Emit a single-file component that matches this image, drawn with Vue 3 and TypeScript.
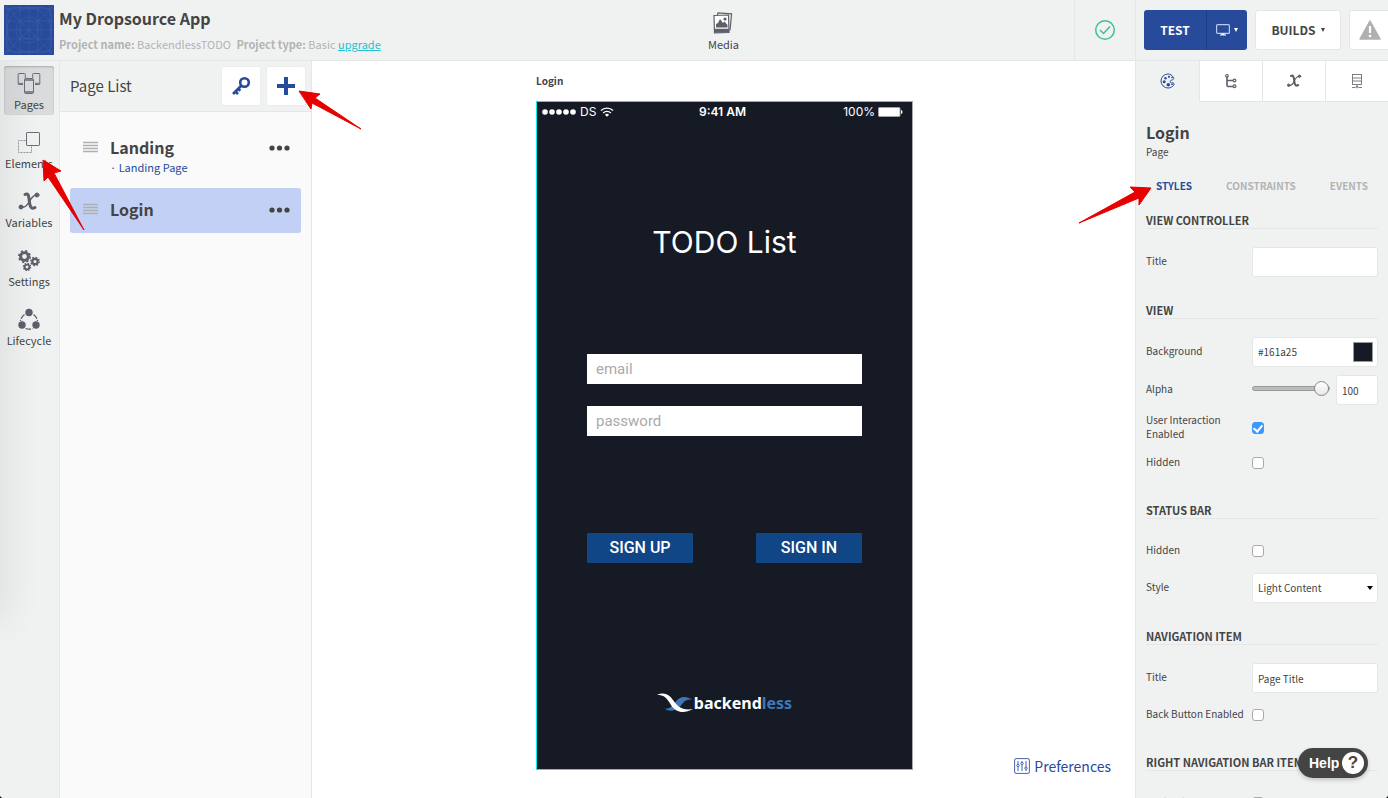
<script setup lang="ts">
import { ref } from 'vue'

interface NavItem {
  id: string
  label: string
}

interface PageItem {
  name: string
  note: string
}

const navItems: NavItem[] = [
  { id: 'pages', label: 'Pages' },
  { id: 'elements', label: 'Elements' },
  { id: 'variables', label: 'Variables' },
  { id: 'settings', label: 'Settings' },
  { id: 'lifecycle', label: 'Lifecycle' },
]

const pages: PageItem[] = [
  { name: 'Landing', note: 'Landing Page' },
  { name: 'Login', note: '' },
]

const inspectorTabs: string[] = ['styles', 'tree', 'variables', 'data']
const subTabs: string[] = ['STYLES', 'CONSTRAINTS', 'EVENTS']

const activeNav = ref('pages')
const activePage = ref('Login')
const activeTab = ref('styles')
const activeSubTab = ref('STYLES')

const viewTitle = ref('')
const background = ref('#161a25')
const alpha = ref(100)
const interaction = ref(true)
const viewHidden = ref(false)
const barHidden = ref(false)
const barStyle = ref('Light Content')
const navTitle = ref('Page Title')
const backButton = ref(false)
const rightEnabled = ref(false)
const email = ref('')
const password = ref('')
</script>

<template>
  <div class="app">
    <header class="topbar">
      <div class="project">
        <svg class="app-icon" viewBox="0 0 50 50" aria-hidden="true">
          <rect width="50" height="50" fill="#274a9a" />
          <g fill="none" stroke="#5573b8" stroke-width="0.5" opacity="0.6">
            <rect x="2.500" y="2.500" width="45" height="45" rx="8" />
            <path d="M0 0L50 50M50 0L0 50M0 25H50M25 0V50M16 0V50M34 0V50M0 16H50M0 34H50M4 0V50M46 0V50M0 4H50M0 46H50" />
            <circle cx="25" cy="25" r="22" />
            <circle cx="25" cy="25" r="13" />
            <circle cx="25" cy="25" r="9" />
          </g>
        </svg>
        <div class="project-text">
          <h1>My Dropsource App</h1>
          <p>
            <b>Project name:</b> BackendlessTODO
            <span class="type"><b>Project type:</b> Basic <a href="#">upgrade</a></span>
          </p>
        </div>
      </div>
      <div class="media-area">
        <button type="button" class="media">
          <svg width="20" height="22" viewBox="0 0 20 22" aria-hidden="true">
            <path d="M4.500 3L5 .8 18.600 1.800 17 18.500" fill="none" stroke="#5b606b" stroke-width="1.200" />
            <path d="M1 3.500L15.500 3 16 20.500 1.500 21z" fill="#fff" stroke="#5b606b" stroke-width="1.200" />
            <path d="M1.300 16.800H16V20.800H1.500z" fill="#5b606b" />
            <path d="M3 15.500V12l2-1 2-4 3 4 1.500-1.500L14.500 13v2.500z" fill="#5b606b" />
            <circle cx="12" cy="7" r="1.600" fill="#5b606b" />
          </svg>
          <span>Media</span>
        </button>
      </div>
      <div class="status">
        <svg width="22" height="22" viewBox="0 0 22 22" aria-label="Saved">
          <circle cx="11" cy="11" r="9.300" fill="none" stroke="#3fbf94" stroke-width="1.500" />
          <path d="M6 11l3.500 3.500 6.500-7" fill="none" stroke="#3fbf94" stroke-width="1.500" />
        </svg>
      </div>
      <div class="actions">
        <div class="test-group">
          <button type="button" class="test">TEST</button>
          <button type="button" class="device" aria-label="Device">
            <svg width="14" height="12" viewBox="0 0 14 12" aria-hidden="true">
              <rect x=".6" y=".6" width="12.800" height="8.800" rx="1" fill="none" stroke="#b9c9f0" stroke-width="1.200" />
              <path d="M5.500 9.500h3v1H10v1H4v-1h1.500z" fill="#fff" />
            </svg>
            <i class="caret"></i>
          </button>
        </div>
        <button type="button" class="builds">BUILDS <i class="caret"></i></button>
        <button type="button" class="warn" aria-label="Warnings">
          <svg width="22" height="20" viewBox="0 0 22 20" aria-hidden="true">
            <path d="M11 1L21 19H1z" fill="#b0b0b0" stroke="#b0b0b0" stroke-width="1.500" stroke-linejoin="round" />
            <path d="M11 6v7" stroke="#fff" stroke-width="2.200" />
            <circle cx="11" cy="16" r="1.300" fill="#fff" />
          </svg>
        </button>
      </div>
    </header>

    <div class="body">
      <nav class="rail">
        <button
          v-for="item in navItems"
          :key="item.id"
          type="button"
          class="rail-item"
          :class="{ active: activeNav === item.id }"
          @click="activeNav = item.id"
        >
          <svg width="24" height="24" viewBox="0 0 24 24" aria-hidden="true">
            <g v-if="item.id === 'pages'" fill="none" stroke="#6a6e78">
              <path d="M6 12.500H2a.8.8 0 01-.8-.8V2.300a.8.8 0 01.8-.8h5.500a.8.800 0 01.8.8V6M18 12.500h4a.8.8 0 00.8-.8V2.300a.8.8 0 00-.8-.8h-5.500a.8.800 0 00-.8.8V6M1.200 11.300H6M18 11.300h4.800" />
              <rect x="7.500" y="6.500" width="9" height="15" rx="1.200" />
              <path d="M7.500 8h9M7.500 20h9" stroke-width="1.400" />
            </g>
            <g v-else-if="item.id === 'elements'" fill="none" stroke="#6a6e78">
              <path d="M8.500 9.500H1.500v12h13V15" stroke="#92959b" stroke-dasharray="2 1" />
              <rect x="9.500" y="1.500" width="13" height="13" rx=".6" />
            </g>
            <g v-else-if="item.id === 'variables'" fill="none" stroke="#5b606b" stroke-linecap="round">
              <path d="M8 4.500C11.500 2.500 11.800 6 12.300 11s1.500 9 5.700 6.500" stroke-width="3" />
              <path d="M20 4.500C16 5 14 8.500 12 12S7.500 18 4 17.500" stroke-width="1.500" />
              <circle cx="20" cy="5" r="2" fill="#5b606b" />
              <circle cx="4" cy="17" r="2" fill="#5b606b" />
            </g>
            <g v-else-if="item.id === 'settings'" fill="none" stroke="#5b606b">
              <circle cx="7.500" cy="7.500" r="3.900" stroke-width="2.900" />
              <circle cx="7.500" cy="7.500" r="5.700" stroke-width="1.600" stroke-dasharray="2.200 2.280" />
              <circle cx="18" cy="12.500" r="2.700" stroke-width="2.300" />
              <circle cx="18" cy="12.500" r="4.200" stroke-width="1.400" stroke-dasharray="1.650 1.650" />
              <circle cx="10" cy="18" r="2.400" stroke-width="1.900" />
              <circle cx="10" cy="18" r="3.600" stroke-width="1.300" stroke-dasharray="1.400 1.430" />
            </g>
            <g v-else>
              <path d="M7.500 6.500A10 10 0 003.500 13M16.500 6.500A10 10 0 0120.500 13M8.500 20.500a9 9 0 007 0" fill="none" stroke="#5b606b" stroke-width="1.300" stroke-dasharray="5.500 1.200" />
              <circle cx="12" cy="4.500" r="3.700" fill="#5b606b" />
              <circle cx="5" cy="17" r="3.700" fill="#5b606b" />
              <circle cx="19" cy="17" r="3.700" fill="#5b606b" />
            </g>
          </svg>
          <span>{{ item.label }}</span>
        </button>
      </nav>

      <section class="page-list">
        <div class="list-head">
          <h2>Page List</h2>
          <button type="button" aria-label="Access">
            <svg width="20" height="20" viewBox="0 0 20 20" aria-hidden="true">
              <circle cx="13.500" cy="6.500" r="4.300" fill="none" stroke="#274a9a" stroke-width="2.600" />
              <path d="M10.500 9.500L2 18M4.500 15.500l2.500 2.500M7.500 13l1.800 1.800" fill="none" stroke="#274a9a" stroke-width="2.600" />
            </svg>
          </button>
          <button type="button" aria-label="Add page">
            <svg width="18" height="18" viewBox="0 0 18 18" aria-hidden="true">
              <path d="M9 0v18M0 9h18" stroke="#274a9a" stroke-width="4" />
            </svg>
          </button>
        </div>
        <ul>
          <li v-for="page in pages" :key="page.name" :class="{ selected: activePage === page.name }" @click="activePage = page.name">
            <svg class="grip" width="15" height="12" viewBox="0 0 15 12" aria-hidden="true">
              <path d="M0 1.500h15M0 4.500h15M0 7.500h15M0 10.500h15" stroke="#b0b0b0" stroke-width="1.400" />
            </svg>
            <div class="page-name">
              <strong>{{ page.name }}</strong>
              <small v-if="page.note">· {{ page.note }}</small>
            </div>
            <button type="button" class="more" :aria-label="'Options for ' + page.name">
              <svg width="21" height="6" viewBox="0 0 21 6" aria-hidden="true">
                <g fill="#444"><circle cx="3" cy="3" r="2.600" /><circle cx="10.500" cy="3" r="2.600" /><circle cx="18" cy="3" r="2.600" /></g>
              </svg>
            </button>
          </li>
        </ul>
      </section>

      <main class="canvas">
        <div class="stage">
          <h3>Login</h3>
          <div class="phone">
            <div class="phone-status">
              <span class="carrier">
                <svg width="34" height="6" viewBox="0 0 34 6" aria-hidden="true">
                  <g fill="#fff"><circle cx="3" cy="3" r="2.800" /><circle cx="10" cy="3" r="2.800" /><circle cx="17" cy="3" r="2.800" /><circle cx="24" cy="3" r="2.800" /><circle cx="31" cy="3" r="2.800" /></g>
                </svg>
                DS
                <svg width="14" height="10" viewBox="0 0 14 10" aria-hidden="true">
                  <path d="M1 3.600a8.500 8.500 0 0112 0M3.200 5.900a5.400 5.400 0 017.600 0" fill="none" stroke="#fff" stroke-width="1.400" />
                  <path d="M7 9.800L4.900 7.700a3 3 0 014.200 0z" fill="#fff" />
                </svg>
              </span>
              <span class="clock">9:41 AM</span>
              <span class="power">
                100%
                <svg width="25" height="10" viewBox="0 0 25 10" aria-hidden="true">
                  <rect x=".5" y=".5" width="21.500" height="9" rx="1" fill="#fff" stroke="#a2a3a8" />
                  <path d="M23 3c2 .5 2 3.500 0 4z" fill="#fff" />
                </svg>
              </span>
            </div>
            <p class="screen-title">TODO List</p>
            <form class="login" @submit.prevent>
              <input v-model="email" type="email" placeholder="email" aria-label="email" />
              <input v-model="password" type="password" placeholder="password" aria-label="password" />
              <div class="login-buttons">
                <button type="button">SIGN UP</button>
                <button type="button">SIGN IN</button>
              </div>
            </form>
            <div class="brand">
              <svg width="36" height="20" viewBox="0 0 36 20" aria-hidden="true">
                <path d="M7.500 15.500c5 1 8-2.500 11.500-7s9-6.500 16.500-1.500c-5.500-1.500-8 1-11.500 5.500S13.500 20 7.500 15.500z" fill="#3c78b8" />
                <path d="M0 2c7-3 12-1 16 5s9 11 20 9c-9 5-17 4-22-4S7 2 0 2z" fill="#fff" />
              </svg>
              <span>backend<em>less</em></span>
            </div>
          </div>
        </div>
        <button type="button" class="preferences">
          <svg width="16" height="16" viewBox="0 0 16 16" aria-hidden="true">
            <g fill="none" stroke="#4564ad">
              <rect x=".6" y=".6" width="14.800" height="14.800" rx="1.500" />
              <path d="M4 3v3M4 9v4M8 3v1.500M8 7v6M12 3v6M12 11.500V13" />
              <circle cx="4" cy="7.500" r="1.200" /><circle cx="8" cy="5.500" r="1.200" /><circle cx="12" cy="10.200" r="1.200" />
            </g>
          </svg>
          Preferences
        </button>
      </main>

      <aside class="inspector">
        <div class="tabs">
          <button
            v-for="tab in inspectorTabs"
            :key="tab"
            type="button"
            :aria-label="tab"
            :class="{ active: activeTab === tab }"
            @click="activeTab = tab"
          >
            <svg width="16" height="16" viewBox="0 0 16 16" aria-hidden="true">
              <g v-if="tab === 'styles'">
                <path d="M13.500 4.500C12 2 10 1 8 1a6.900 6.900 0 000 14c3 0 6-2 6-4 0-1.500-1.500-1-2.700-1.200-1.800-.4-1.300-2.300 0-2.600 1.500-.3 3-.9 2.200-2.700z" fill="none" stroke="#274a9a" />
                <g fill="#274a9a"><circle cx="5.500" cy="5.200" r="1.200" /><circle cx="4.200" cy="8.700" r="1.500" /><circle cx="8.300" cy="11.700" r="1.800" /><circle cx="9" cy="3.800" r="1.100" /><circle cx="12" cy="4.600" r=".8" /><circle cx="12" cy="11.300" r=".9" /></g>
              </g>
              <g v-else-if="tab === 'tree'" fill="none" stroke="#5b606b" stroke-width="1.200">
                <path d="M4 4v8.500q0 1 1 1h5M4 7.500h6" stroke-width="1.600" />
                <circle cx="4" cy="2.800" r="1.300" /><circle cx="11.500" cy="7.500" r="1.400" /><circle cx="11.500" cy="13.300" r="1.400" />
              </g>
              <g v-else-if="tab === 'variables'" fill="none" stroke="#5b606b" stroke-linecap="round">
                <path d="M5 3C7.300 1.800 7.800 4 8.200 7.500s1 6.300 4 4.500" stroke-width="2.100" />
                <path d="M13.500 3C10.500 3.300 9 6 8 8.500S5 12.800 2.500 12.500" stroke-width="1.200" />
                <circle cx="13.500" cy="3.300" r="1.200" fill="#5b606b" /><circle cx="2.700" cy="12.200" r="1.200" fill="#5b606b" />
              </g>
              <g v-else fill="none" stroke="#7a7e86">
                <rect x="3.500" y="1.500" width="9" height="10" />
                <path d="M3.500 5h9M3.500 8h9M8 11.500V14M3 14.500h3.500M9.500 14.500H13" />
                <circle cx="8" cy="14" r=".9" />
              </g>
            </svg>
          </button>
        </div>
        <div class="inspector-body">
          <h2>Login</h2>
          <p class="kind">Page</p>
          <div class="sub-tabs">
            <button v-for="tab in subTabs" :key="tab" type="button" :class="{ active: activeSubTab === tab }" @click="activeSubTab = tab">{{ tab }}</button>
          </div>

          <section>
            <h4>VIEW CONTROLLER</h4>
            <div class="row">
              <label for="vc-title">Title</label>
              <input id="vc-title" v-model="viewTitle" type="text" class="field" />
            </div>
          </section>

          <section>
            <h4>VIEW</h4>
            <div class="row">
              <label for="view-bg">Background</label>
              <div class="field color">
                <input id="view-bg" v-model="background" type="text" />
                <span class="swatch" :style="{ background }"></span>
              </div>
            </div>
            <div class="row">
              <label for="view-alpha">Alpha</label>
              <div class="alpha">
                <input id="view-alpha" v-model.number="alpha" type="range" min="0" max="100" />
                <input v-model.number="alpha" type="text" class="field" aria-label="Alpha value" />
              </div>
            </div>
            <div class="row check">
              <label for="view-ui">User Interaction Enabled</label>
              <input id="view-ui" v-model="interaction" type="checkbox" />
            </div>
            <div class="row check">
              <label for="view-hidden">Hidden</label>
              <input id="view-hidden" v-model="viewHidden" type="checkbox" />
            </div>
          </section>

          <section>
            <h4>STATUS BAR</h4>
            <div class="row check">
              <label for="bar-hidden">Hidden</label>
              <input id="bar-hidden" v-model="barHidden" type="checkbox" />
            </div>
            <div class="row">
              <label for="bar-style">Style</label>
              <div class="select-wrap">
                <select id="bar-style" v-model="barStyle" class="field">
                  <option>Light Content</option>
                </select>
              </div>
            </div>
          </section>

          <section>
            <h4>NAVIGATION ITEM</h4>
            <div class="row">
              <label for="nav-title">Title</label>
              <input id="nav-title" v-model="navTitle" type="text" class="field" />
            </div>
            <div class="row check">
              <label for="nav-back">Back Button Enabled</label>
              <input id="nav-back" v-model="backButton" type="checkbox" />
            </div>
          </section>

          <section>
            <h4>RIGHT NAVIGATION BAR ITEM</h4>
            <div class="row check">
              <label for="right-enabled">Enabled</label>
              <input id="right-enabled" v-model="rightEnabled" type="checkbox" />
            </div>
          </section>
        </div>
      </aside>
    </div>

    <button type="button" class="help">Help <span>?</span></button>

    <svg class="arrows left" width="370" height="240" viewBox="0 0 370 240" aria-hidden="true">
      <path d="M299 91L320 94 315 98 361 129 312 103 311 109Z" />
      <path d="M43 160L61 171 54 173 84 230 48 177 44 181Z" />
    </svg>
    <svg class="arrows right" width="80" height="44" viewBox="0 0 80 44" aria-hidden="true">
      <path d="M75 6L54 5 59 10 3 41 63 16 63 23Z" />
    </svg>
  </div>
</template>

<style>
html,
body {
  margin: 0;
  background: #111;
}
</style>

<style scoped>
.app {
  position: relative;
  display: flex;
  flex-direction: column;
  height: 100vh;
  overflow: hidden;
  border-radius: 0 0 4px 4px;
  background: #fff;
  color: #444;
  font-family: "Noto Sans CJK JP", "Noto Sans", sans-serif;
  font-size: 11px;
  line-height: 14px;
}
* {
  box-sizing: border-box;
}
h1, h2, h3, h4, p, ul {
  margin: 0;
  padding: 0;
}
button, input, select {
  margin: 0;
  padding: 0;
  border: 0;
  background: none;
  color: inherit;
  font: inherit;
  outline: 0;
}
svg {
  display: block;
  flex: none;
}

.topbar {
  display: grid;
  grid-template-columns: 312px minmax(0, 1fr) 61px 253px;
  height: 61px;
  flex: none;
  background: #f0f2f2;
  border-bottom: 1px solid #e5e6e6;
}
.project {
  display: flex;
  gap: 5px;
  padding: 5px 4px;
  white-space: nowrap;
}
.app-icon {
  width: 50px;
  height: 50px;
}
.project-text h1 {
  margin-top: 2px;
  font-size: 16px;
  line-height: 22px;
}
.project-text p {
  margin-top: 8px;
  color: #b3b3b3;
}
.type {
  margin-left: 3px;
}
.type a {
  color: #1fc1cf;
}
.media-area {
  display: flex;
  justify-content: center;
  padding-left: 61px;
}
.media {
  display: flex;
  flex-direction: column;
  align-items: center;
  gap: 3px;
  padding-top: 12px;
  align-self: flex-start;
}
.status,
.actions {
  display: flex;
  align-items: center;
  border-left: 1px solid #e5e6e6;
}
.status {
  justify-content: center;
}
.actions {
  gap: 8px;
  padding-left: 8px;
  overflow: hidden;
  font-size: 12px;
  font-weight: bold;
}
.test-group {
  display: flex;
  height: 40px;
  flex: none;
  border-radius: 3px;
  background: #274a9a;
  color: #fff;
}
.test {
  width: 63px;
  border-right: 1px solid #1f3d85;
}
.device {
  display: flex;
  align-items: center;
  justify-content: center;
  gap: 4px;
  width: 40px;
}
.caret {
  border: 2px solid transparent;
  border-top: 4px solid currentColor;
  border-bottom: 0;
}
.builds,
.warn {
  display: flex;
  align-items: center;
  justify-content: center;
  gap: 5px;
  width: 86px;
  height: 40px;
  flex: none;
  border: 1px solid #e5e6e6;
  border-radius: 3px;
  background: #fff;
}
.warn {
  width: 42px;
}

.body {
  display: grid;
  grid-template-columns: 60px 252px minmax(0, 1fr) 253px;
  flex: 1;
  min-height: 0;
}
.rail {
  position: relative;
  display: flex;
  flex-direction: column;
  gap: 10px;
  padding: 5px 4px;
  overflow: hidden;
  border-right: 1px solid #e5e6e6;
  background: #f0f2f2;
}
.rail::before {
  position: absolute;
  top: -40px;
  bottom: 178px;
  left: -20px;
  width: 20px;
  box-shadow: 0 0 40px rgba(0, 0, 0, 0.14);
  content: "";
}
.rail-item {
  display: flex;
  flex-direction: column;
  align-items: center;
  gap: 1px;
  width: 50px;
  height: 49px;
  flex: none;
  padding-top: 6px;
  border-radius: 3px;
  white-space: nowrap;
}
.rail-item.active {
  background: #dadbdc;
  box-shadow: inset 0 1px 2px #aaa;
}
.page-list {
  border-right: 1px solid #e5e6e6;
  background: #fafafa;
}
.list-head {
  display: flex;
  align-items: center;
  gap: 5px;
  height: 51px;
  padding: 0 5px 0 10px;
  border-bottom: 1px solid #e5e6e6;
  background: #f0f2f2;
}
.list-head h2 {
  flex: 1;
  font-size: 15px;
  font-weight: normal;
}
.list-head button {
  display: grid;
  place-items: center;
  width: 40px;
  height: 40px;
  border: 1px solid #ebecec;
  border-radius: 3px;
  background: #fff;
}
.page-list ul {
  display: flex;
  flex-direction: column;
  gap: 8px;
  padding: 14px 10px;
  list-style: none;
}
.page-list li {
  display: flex;
  align-items: flex-start;
  gap: 12px;
  min-height: 45px;
  padding: 10px 11px 0 13px;
  border-radius: 3px;
}
.page-list li:first-child {
  min-height: 54px;
}
.selected {
  background: #c2d0f5;
}
.grip {
  margin-top: 5px;
}
.page-name {
  display: flex;
  flex: 1;
  flex-direction: column;
}
.page-name strong {
  font-size: 16px;
  line-height: 22px;
}
.page-name small {
  color: #274a9a;
  font-size: 11px;
  line-height: 18px;
}
.more {
  margin-top: 9px;
}

.canvas {
  position: relative;
  display: flex;
  justify-content: center;
  padding-left: 2px;
  overflow: hidden;
}
.stage h3 {
  margin: 13px 0;
  font-size: 10px;
  line-height: 14px;
}
.phone {
  display: flex;
  flex-direction: column;
  align-items: center;
  width: 377px;
  height: 669px;
  border: 1px solid #a8a8a8;
  border-top-color: #00f0f0;
  border-left-color: #00f0f0;
  background: #161a25;
  color: #fff;
  font-family: Inter, Roboto, sans-serif;
}
.phone-status {
  display: grid;
  grid-template-columns: 1fr auto 1fr;
  align-items: center;
  align-self: stretch;
  height: 20px;
  padding: 0 9px 0 5px;
  font-size: 12px;
}
.carrier,
.power {
  display: flex;
  align-items: center;
  gap: 4px;
}
.power {
  gap: 3px;
  justify-content: flex-end;
}
.clock {
  font-weight: 600;
}
.screen-title {
  margin-top: 100px;
  font-size: 30px;
  line-height: 40px;
}
.login {
  display: flex;
  flex-direction: column;
  gap: 22px;
  width: 275px;
  margin-top: 92px;
  font-family: Roboto, sans-serif;
}
.login input {
  height: 30px;
  padding: 0 9px;
  background: #fff;
  color: #222;
  font-size: 15px;
}
.login input::placeholder {
  color: #aaa;
}
.login-buttons {
  display: flex;
  justify-content: space-between;
  margin-top: 75px;
}
.login-buttons button {
  width: 106px;
  height: 30px;
  background: #104586;
  font-size: 16px;
  font-weight: 500;
}
.brand {
  display: flex;
  align-items: center;
  gap: 1px;
  margin-top: 130px;
  font-family: "Noto Sans", sans-serif;
  font-size: 16px;
  font-weight: bold;
  line-height: 20px;
}
.brand em {
  color: #3c78b8;
  font-style: normal;
}
.preferences {
  position: absolute;
  right: 24px;
  bottom: 22px;
  display: flex;
  align-items: center;
  gap: 4px;
  color: #274a9a;
  font-size: 14px;
  line-height: 20px;
}

.inspector {
  display: flex;
  flex-direction: column;
  min-height: 0;
  border-left: 1px solid #e5e6e6;
  background: #f0f2f2;
  font-size: 10px;
}
.tabs {
  display: grid;
  grid-template-columns: repeat(4, 1fr);
  height: 41px;
  flex: none;
}
.tabs button {
  display: grid;
  place-items: center;
  border-left: 1px solid #e5e6e6;
  border-bottom: 1px solid #e5e6e6;
  background: #fff;
}
.tabs .active {
  border-color: transparent;
  background: none;
}
.inspector-body {
  flex: 1;
  min-height: 0;
  padding: 19px 10px 0;
  overflow-y: auto;
  scrollbar-width: none;
}
.inspector-body h2 {
  font-size: 16px;
  line-height: 22px;
}
.kind {
  margin-top: 2px;
}
.sub-tabs {
  display: flex;
  justify-content: space-between;
  margin: 20px 0 21px;
  padding: 0 10px;
}
.sub-tabs button {
  color: #b3b3b3;
  font-weight: bold;
}
.sub-tabs .active {
  color: #274a9a;
}
.inspector section {
  display: flex;
  flex-direction: column;
  gap: 8px;
  margin-bottom: 27px;
}
h4 {
  margin-bottom: 10px;
  padding-bottom: 2px;
  border-bottom: 1px solid #e5e7e7;
  font-size: 11px;
  line-height: 12px;
  white-space: nowrap;
}
.row {
  display: grid;
  grid-template-columns: 106px minmax(0, 1fr);
  align-items: center;
  height: 30px;
}
.row.check {
  height: 28px;
}
.row label {
  padding-bottom: 2px;
}
.field {
  width: 100%;
  height: 30px;
  padding: 0 5px;
  border: 1px solid #e5e6e6;
  border-radius: 3px;
  background: #fff;
}
.color {
  display: flex;
  align-items: center;
  padding-right: 4px;
}
.color input {
  flex: 1;
  min-width: 0;
}
.swatch {
  width: 20px;
  height: 20px;
  border: 1px solid #999;
}
.alpha {
  display: flex;
  align-items: center;
  gap: 6px;
}
.alpha .field {
  width: 42px;
}
input[type="range"] {
  flex: 1;
  min-width: 0;
  height: 16px;
  margin-bottom: 4px;
  appearance: none;
}
input[type="range"]::-webkit-slider-runnable-track {
  height: 5px;
  border: 1px solid #999;
  border-radius: 3px;
  background: #bbb;
}
input[type="range"]::-webkit-slider-thumb {
  width: 15px;
  height: 15px;
  margin-top: -6px;
  border: 1px solid #888;
  border-radius: 50%;
  background: linear-gradient(#fff, #e8e8e8);
  appearance: none;
}
input[type="checkbox"] {
  display: grid;
  place-items: center;
  width: 12px;
  height: 12px;
  border: 1px solid #aaa;
  border-radius: 3px;
  background: #fff;
  appearance: none;
}
input[type="checkbox"]:checked {
  border-color: #3b99fc;
  background: #3b99fc;
}
input[type="checkbox"]:checked::after {
  width: 4px;
  height: 7px;
  margin-bottom: 2px;
  border: solid #fff;
  border-width: 0 2px 2px 0;
  content: "";
  transform: rotate(40deg);
}
.select-wrap {
  display: grid;
  align-items: center;
}
.select-wrap > * {
  grid-area: 1 / 1;
}
.select-wrap::after {
  grid-area: 1 / 1;
  justify-self: end;
  margin-right: 5px;
  border: 3px solid transparent;
  border-top: 4px solid #000;
  border-bottom: 0;
  content: "";
  pointer-events: none;
}
select {
  appearance: none;
}

.help {
  position: absolute;
  right: 20px;
  bottom: 20px;
  display: flex;
  align-items: center;
  justify-content: space-between;
  width: 70px;
  height: 30px;
  padding: 0 4px 0 11px;
  border-radius: 15px;
  background: #444;
  box-shadow: 0 2px 4px rgba(0, 0, 0, 0.2);
  color: #fff;
  font-family: "Liberation Sans", Arial, sans-serif;
  font-size: 14px;
  font-weight: bold;
}
.help span {
  width: 22px;
  border-radius: 50%;
  background: #fff;
  color: #444;
  font-size: 17px;
  line-height: 22px;
}
.arrows {
  position: absolute;
  top: 0;
  left: 0;
  pointer-events: none;
}
.arrows.right {
  top: 182px;
  right: 232px;
  left: auto;
}
.arrows path {
  fill: #e60000;
  stroke: #e60000;
  stroke-linejoin: round;
}
</style>
